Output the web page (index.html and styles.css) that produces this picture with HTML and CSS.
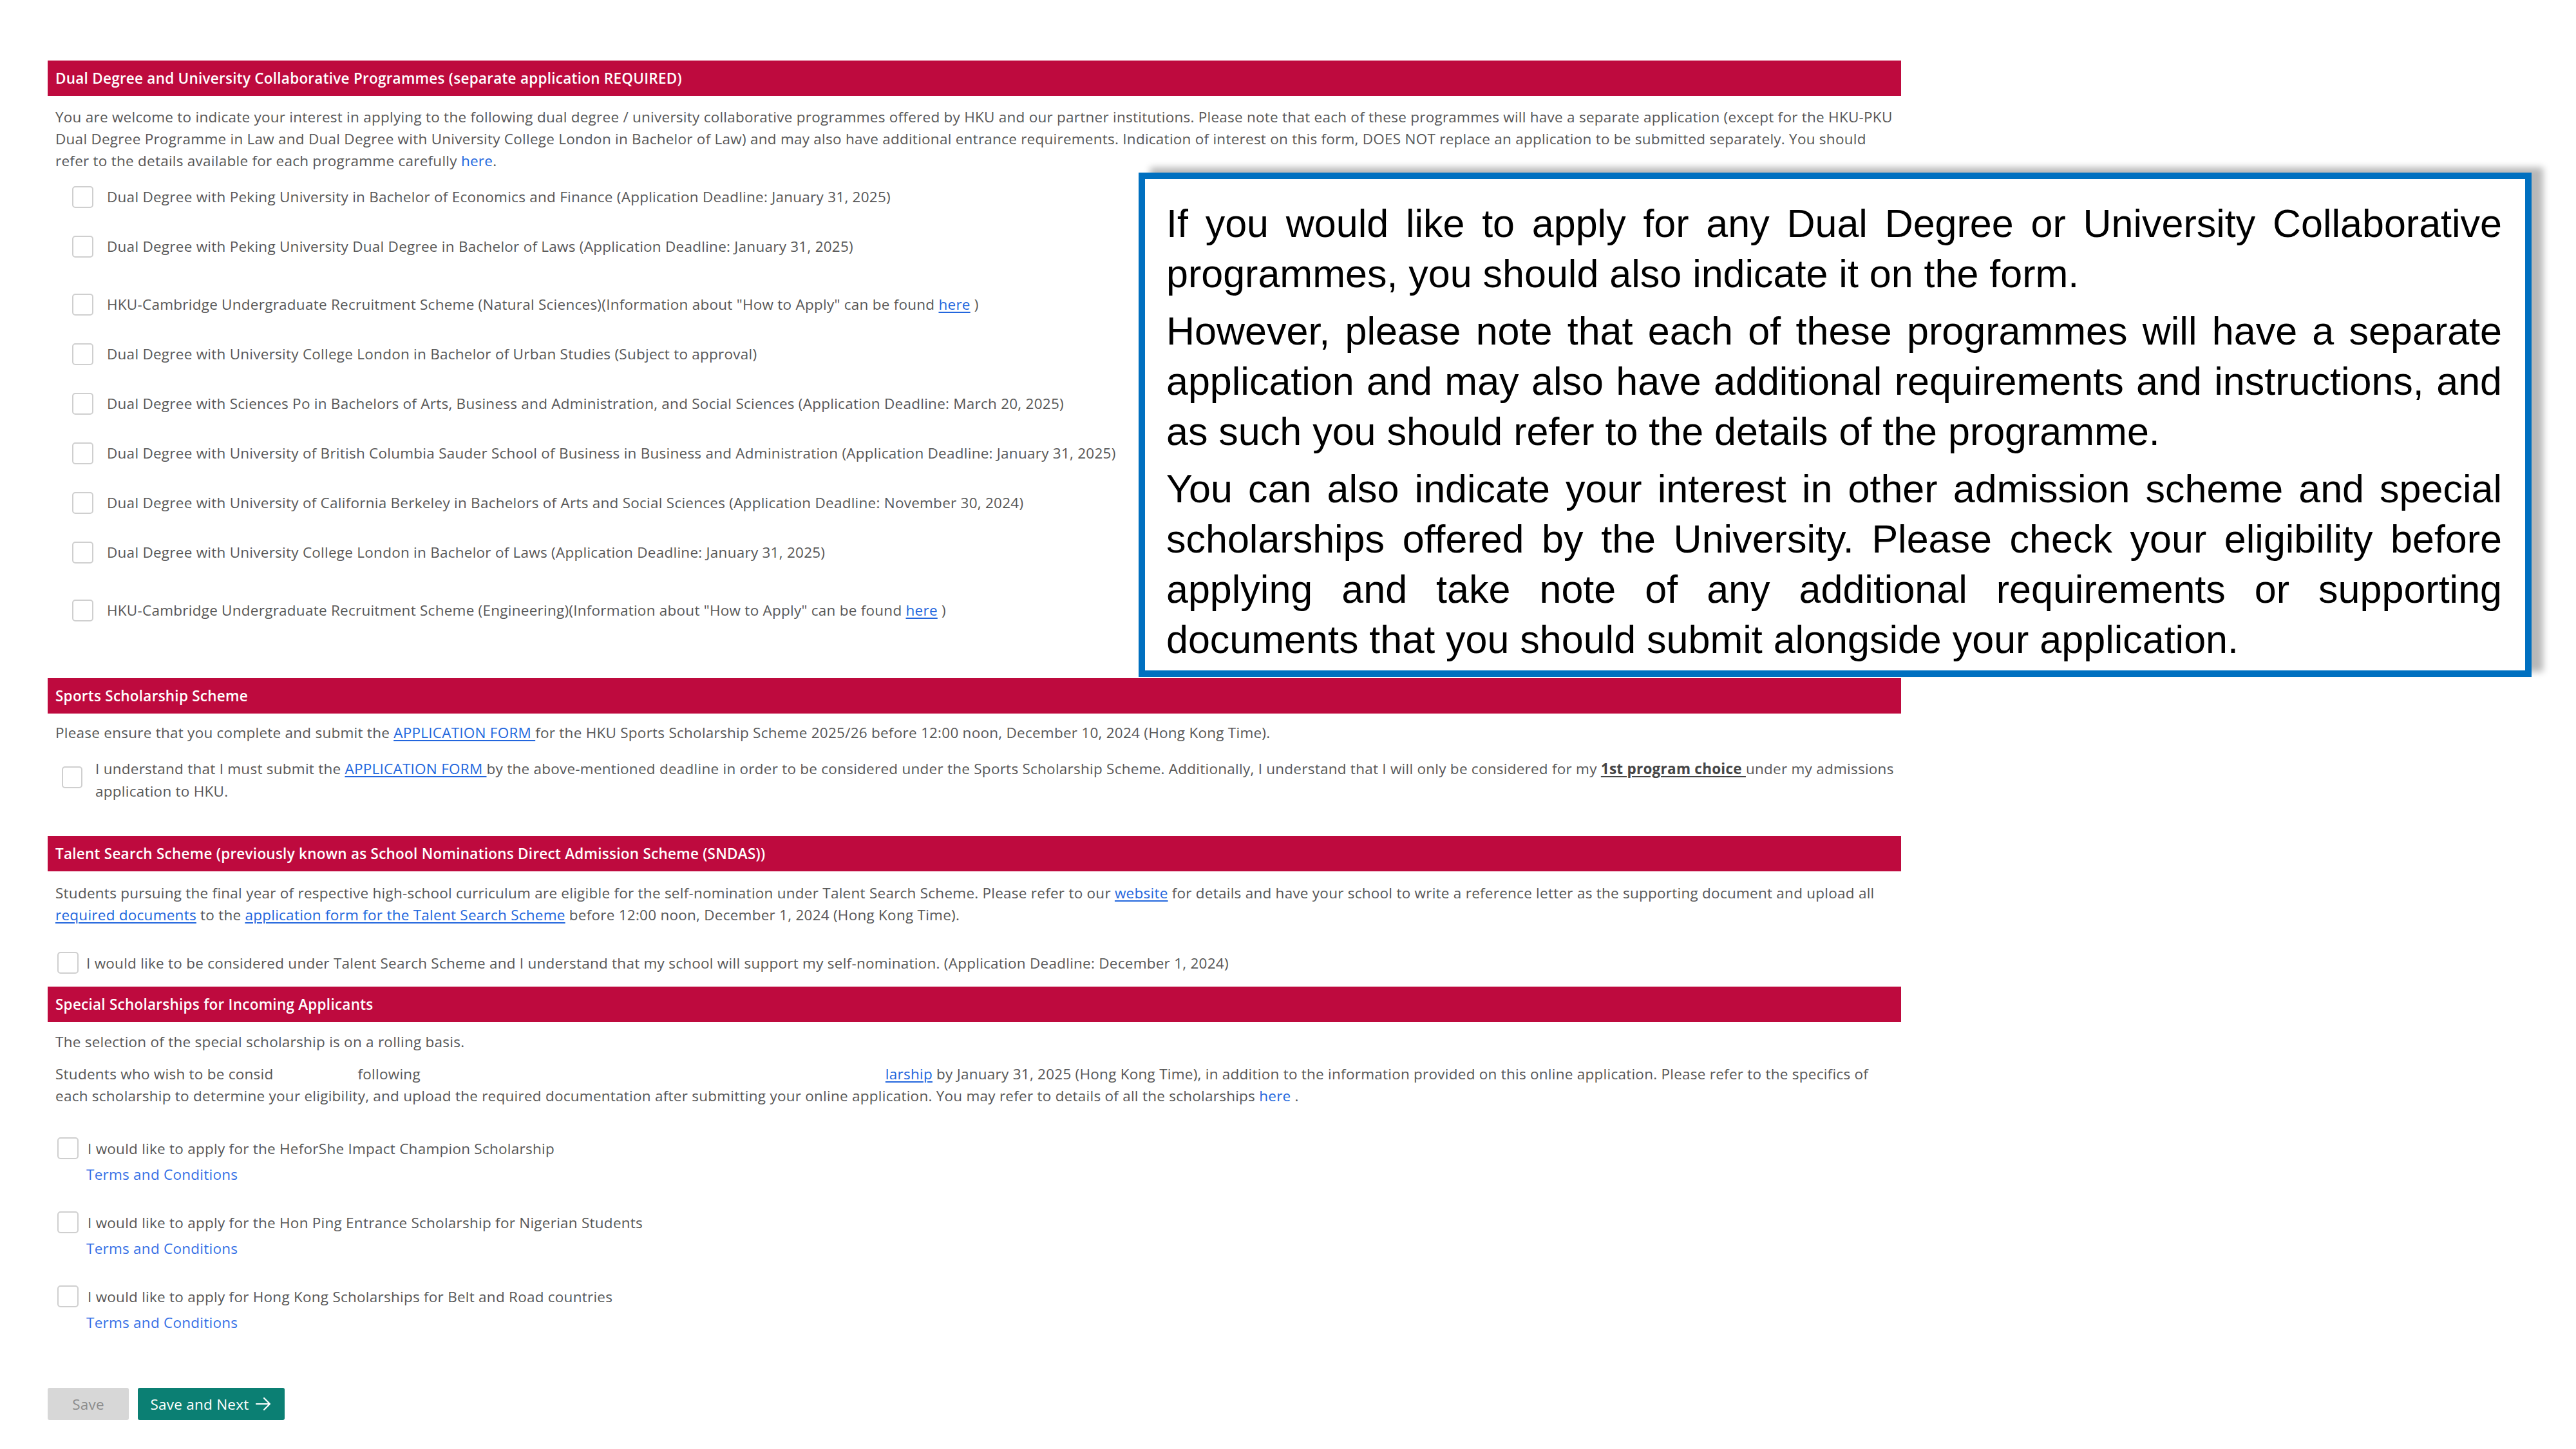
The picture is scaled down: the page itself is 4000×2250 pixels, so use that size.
FILE: index.html
```html
<!DOCTYPE html>
<html lang="en">
<head>
<meta charset="utf-8">
<title>Application – Other Schemes</title>
<link rel="stylesheet" href="styles.css">
</head>
<body>
<div class="page">
  <main class="form">
    <section class="sec sec-dual">
      <h2 class="sec-head">Dual Degree and University Collaborative Programmes (separate application REQUIRED)</h2>
      <p class="txt intro">You are welcome to indicate your interest in applying to the following dual degree / university collaborative programmes offered by HKU and our partner institutions. Please note that each of these programmes will have a separate application (except for the HKU-PKU<br>Dual Degree Programme in Law and Dual Degree with University College London in Bachelor of Law) and may also have additional entrance requirements. Indication of interest on this form, DOES NOT replace an application to be submitted separately. You should<br>refer to the details available for each programme carefully <a class="lnk" href="#">here</a>.</p>
      <ul class="opts">
        <li class="opt"><span class="cb"></span><span>Dual Degree with Peking University in Bachelor of Economics and Finance (Application Deadline: January 31, 2025)</span></li>
        <li class="opt"><span class="cb"></span><span>Dual Degree with Peking University Dual Degree in Bachelor of Laws (Application Deadline: January 31, 2025)</span></li>
        <li class="opt opt-link"><span class="cb"></span><span>HKU-Cambridge Undergraduate Recruitment Scheme (Natural Sciences)(Information about "How to Apply" can be found <a class="lnk ul" href="#">here</a> )</span></li>
        <li class="opt"><span class="cb"></span><span>Dual Degree with University College London in Bachelor of Urban Studies (Subject to approval)</span></li>
        <li class="opt"><span class="cb"></span><span>Dual Degree with Sciences Po in Bachelors of Arts, Business and Administration, and Social Sciences (Application Deadline: March 20, 2025)</span></li>
        <li class="opt"><span class="cb"></span><span>Dual Degree with University of British Columbia Sauder School of Business in Business and Administration (Application Deadline: January 31, 2025)</span></li>
        <li class="opt"><span class="cb"></span><span>Dual Degree with University of California Berkeley in Bachelors of Arts and Social Sciences (Application Deadline: November 30, 2024)</span></li>
        <li class="opt"><span class="cb"></span><span>Dual Degree with University College London in Bachelor of Laws (Application Deadline: January 31, 2025)</span></li>
        <li class="opt opt-link"><span class="cb"></span><span>HKU-Cambridge Undergraduate Recruitment Scheme (Engineering)(Information about "How to Apply" can be found <a class="lnk ul" href="#">here</a> )</span></li>
      </ul>
    </section>

    <section class="sec sec-sports">
      <h2 class="sec-head">Sports Scholarship Scheme</h2>
      <p class="txt">Please ensure that you complete and submit the <a class="lnk ul" href="#">APPLICATION FORM </a>for the HKU Sports Scholarship Scheme 2025/26 before 12:00 noon, December 10, 2024 (Hong Kong Time).</p>
      <div class="check check-sports"><span class="cb"></span><span class="check-text">I understand that I must submit the <a class="lnk ul" href="#">APPLICATION FORM </a>by the above-mentioned deadline in order to be considered under the Sports Scholarship Scheme. Additionally, I understand that I will only be considered for my <b class="strong">1st program choice </b>under my admissions<br>application to HKU.</span></div>
    </section>

    <section class="sec sec-talent">
      <h2 class="sec-head">Talent Search Scheme (previously known as School Nominations Direct Admission Scheme (SNDAS))</h2>
      <p class="txt talent-p">Students pursuing the final year of respective high-school curriculum are eligible for the self-nomination under Talent Search Scheme. Please refer to our <a class="lnk ul" href="#">website</a> for details and have your school to write a reference letter as the supporting document and upload all<br><a class="lnk ul" href="#">required documents</a> to the <a class="lnk ul" href="#">application form for the Talent Search Scheme</a> before 12:00 noon, December 1, 2024 (Hong Kong Time).</p>
      <div class="check check-talent"><span class="cb"></span><span>I would like to be considered under Talent Search Scheme and I understand that my school will support my self-nomination. (Application Deadline: December 1, 2024)</span></div>
    </section>

    <section class="sec sec-special">
      <h2 class="sec-head">Special Scholarships for Incoming Applicants</h2>
      <p class="txt special-p1">The selection of the special scholarship is on a rolling basis.</p>
      <p class="txt special-p2">Students who wish to be consid<span class="gap gap-a"></span>following<span class="gap gap-b"></span><a class="lnk ul" href="#">larship</a> by January 31, 2025 (Hong Kong Time), in addition to the information provided on this online application. Please refer to the specifics of<br>each scholarship to determine your eligibility, and upload the required documentation after submitting your online application. You may refer to details of all the scholarships <a class="lnk" href="#">here</a> .</p>
      <div class="sch">
        <div class="check check-sch"><span class="cb"></span><span>I would like to apply for the HeforShe Impact Champion Scholarship</span></div>
        <a class="terms" href="#">Terms and Conditions</a>
      </div>
      <div class="sch">
        <div class="check check-sch"><span class="cb"></span><span>I would like to apply for the Hon Ping Entrance Scholarship for Nigerian Students</span></div>
        <a class="terms" href="#">Terms and Conditions</a>
      </div>
      <div class="sch">
        <div class="check check-sch"><span class="cb"></span><span>I would like to apply for Hong Kong Scholarships for Belt and Road countries</span></div>
        <a class="terms" href="#">Terms and Conditions</a>
      </div>
    </section>

    <div class="actions">
      <button class="btn btn-save" type="button">Save</button>
      <button class="btn btn-next" type="button">Save and Next
        <svg class="arrow" viewBox="0 0 28 28" width="28" height="28" aria-hidden="true"><path d="M3 14 H24 M15 5 L24 14 L15 23" fill="none" stroke="#fff" stroke-width="2.2" stroke-linecap="round" stroke-linejoin="round"/></svg>
      </button>
    </div>
  </main>

  <aside class="callout">
    <p class="c-para"><span class="c-line">If you would like to apply for any Dual Degree or University Collaborative</span><span class="c-line last">programmes, you should also indicate it on the form.</span></p>
    <p class="c-para"><span class="c-line">However, please note that each of these programmes will have a separate</span><span class="c-line">application and may also have additional requirements and instructions, and</span><span class="c-line last">as such you should refer to the details of the programme.</span></p>
    <p class="c-para"><span class="c-line">You can also indicate your interest in other admission scheme and special</span><span class="c-line">scholarships offered by the University. Please check your eligibility before</span><span class="c-line">applying and take note of any additional requirements or supporting</span><span class="c-line last">documents that you should submit alongside your application.</span></p>
  </aside>
</div>
</body>
</html>
```

FILE: styles.css
```css
* { box-sizing: border-box; }

html, body {
  margin: 0;
  padding: 0;
  background: #ffffff;
}

body {
  font-family: "Open Sans", "Noto Sans", "DejaVu Sans", sans-serif;
  font-size: 22.5px;
  letter-spacing: 0.25px;
  color: #575757;
}

.page {
  position: relative;
  width: 4000px;
  height: 2250px;
  overflow: hidden;
}

.form {
  width: 2878px;
  margin-left: 74px;
  padding-top: 94px;
}

.sec-head {
  margin: 0;
  height: 55px;
  padding-left: 12px;
  display: flex;
  align-items: center;
  background: #be0a3e;
  color: #ffffff;
  font-size: 22.5px;
  font-weight: 600;
}

.txt {
  margin: 0;
  padding: 0 12px;
  line-height: 34px;
  white-space: nowrap;
}

.intro { margin-top: 16px; }

.lnk {
  color: #2266dd;
  text-decoration: none;
}
.lnk.ul { text-decoration: underline; text-underline-offset: 3px; }

.strong {
  color: #454545;
  font-weight: 700;
  text-decoration: underline;
  text-underline-offset: 3px;
}

.cb {
  flex: none;
  width: 33px;
  height: 34px;
  border: 2px solid #cfcfcf;
  border-radius: 5px;
  background: #ffffff;
}

/* Dual degree list */
.opts {
  list-style: none;
  margin: 0;
  padding: 0 0 0 38px;
}
.opt {
  height: 77px;
  display: flex;
  align-items: center;
  gap: 21px;
}
.opt-link { margin-top: 13px; }

/* Sports */
.sec-sports { margin-top: 67px; }
.sec-sports .txt { margin-top: 13px; }
.check {
  display: flex;
  align-items: center;
}
.check-sports {
  margin-top: 21px;
  padding-left: 22px;
  gap: 20px;
  line-height: 35px;
}
.check-sports .cb { width: 32px; height: 34px; margin-top: -8px; }
.check-text { white-space: nowrap; }

/* Talent */
.sec-talent { margin-top: 52px; }
.talent-p { margin-top: 17px; }
.check-talent {
  margin-top: 40px;
  height: 34px;
  padding-left: 15px;
  gap: 12px;
}

/* Special */
.sec-special { margin-top: 20px; }
.special-p1 { margin-top: 14px; }
.special-p2 { margin-top: 16px; }
.gap { display: inline-block; }
.gap-a { width: 131px; }
.gap-b { width: 722px; }

.sch { margin-top: 40px; }
.sch:first-of-type { margin-top: 47px; }
.check-sch {
  height: 34px;
  padding-left: 15px;
  gap: 14px;
}
.terms {
  display: block;
  margin-top: 7px;
  padding-left: 60px;
  line-height: 34px;
  color: #3570e6;
  text-decoration: none;
}

/* Buttons */
.actions {
  margin-top: 84px;
  display: flex;
  gap: 14px;
}
.btn {
  height: 50px;
  border: none;
  border-radius: 3px;
  font-family: inherit;
  font-size: 22.5px;
  letter-spacing: 0.25px;
  padding: 0;
}
.btn-save {
  width: 126px;
  background: #d7d7d7;
  color: #8c8c8c;
}
.btn-next {
  width: 228px;
  background: #0b7f73;
  color: #ffffff;
  display: flex;
  align-items: center;
  justify-content: center;
  gap: 8px;
}

/* Callout overlay */
.callout {
  position: absolute;
  left: 1768px;
  top: 268px;
  width: 2163px;
  height: 783px;
  border: 10px solid #0070c0;
  background: #ffffff;
  padding: 30px 36px 0 33px;
  box-shadow: 18px -8px 10px rgba(0, 0, 0, 0.28);
  font-family: "Liberation Sans", Arial, sans-serif;
  font-size: 61px;
  line-height: 78px;
  letter-spacing: 0;
  color: #000000;
}
.c-para { margin: 0; }
.c-para + .c-para { margin-top: 11px; }
.c-line {
  display: block;
  white-space: nowrap;
  text-align: justify;
  text-align-last: justify;
}
.c-line.last {
  text-align: left;
  text-align-last: left;
}
```
